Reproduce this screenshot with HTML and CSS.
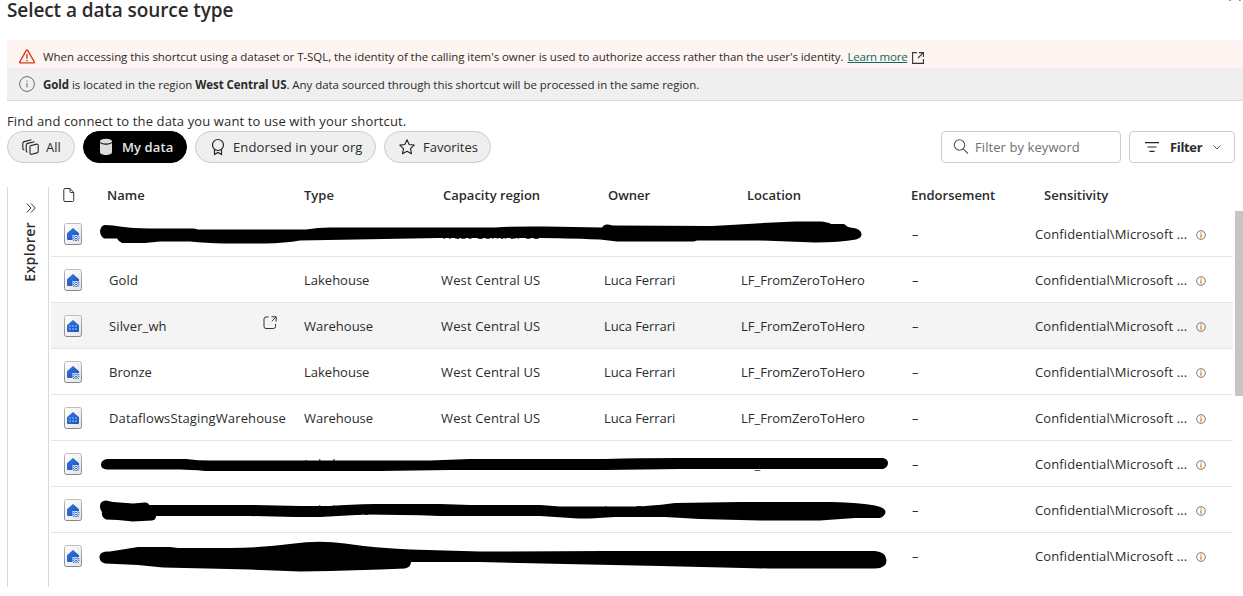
FILE: index.html
```
<!DOCTYPE html>
<html lang="en">
<head>
<meta charset="utf-8">
<title>Select a data source type</title>
<link rel="stylesheet" href="styles.css">
</head>
<body>
<svg class="defs" width="0" height="0">
  <defs>
    <linearGradient id="tile" x1="0" y1="0" x2="1" y2="1"><stop offset="0" stop-color="#fff"/><stop offset="1" stop-color="#e4e4e4"/></linearGradient>
    <linearGradient id="edge" x1="0" y1="0" x2="0" y2="1"><stop offset="0" stop-color="#bcbcbc"/><stop offset="1" stop-color="#858585"/></linearGradient>
    <linearGradient id="blue" x1="0" y1="0" x2="1" y2="1"><stop offset="0" stop-color="#2f78e0"/><stop offset="1" stop-color="#1d50bd"/></linearGradient>
    <symbol id="lakehouse" viewBox="0 0 18 22">
      <rect x=".5" y=".5" width="17" height="21" rx="2" fill="url(#tile)" stroke="url(#edge)"/>
      <path d="M3 10.200 9 5l6 5.200V12H8.500v5H4a1 1 0 0 1-1-1z" fill="url(#blue)"/>
      <path d="M9 13.800 10.500 12.800 12 13.800 13.500 12.800 15.500 13.500M8.500 15.800 10.500 14.800 12 15.800 13.500 14.800 15.500 15.500M9 17.600 10.500 16.800 12 17.600 13.500 16.800 15 17.300" fill="none" stroke="#2a65d0" stroke-width=".9"/>
    </symbol>
    <symbol id="warehouse" viewBox="0 0 18 22">
      <rect x=".5" y=".5" width="17" height="21" rx="2" fill="url(#tile)" stroke="url(#edge)"/>
      <path d="M3 10.200 9 5l6 5.200V16a1 1 0 0 1-1 1H4a1 1 0 0 1-1-1z" fill="url(#blue)"/>
      <path d="M5 10h2v2H5zM8 10h2v2H8zM11 10h2v2h-2zM5 13h2v2H5zM8 13h2v2H8zM11 13h2v2h-2z" fill="#5d93ea"/>
    </symbol>
    <symbol id="info" viewBox="0 0 10 10">
      <circle cx="5" cy="5" r="4.300" fill="none" stroke="#74777f" stroke-width="1"/>
      <path d="M5 4.200v3.500M5 2.300v1.200" stroke="#d98a30" stroke-width="1.400"/>
    </symbol>
  </defs>
</svg>
<main class="dialog">
  <svg class="close" width="12" height="2" viewBox="0 0 12 2"><path d="M-1-2 1.500.7M13-2 10.500.7" stroke="#333" stroke-width="1.200"/></svg>
  <h1 class="title">Select a data source type</h1>

  <div class="notice warning">
    <svg width="16" height="16" viewBox="0 0 16 16" fill="none" stroke="#d13f12" stroke-width="1.400"><path d="M7.300 1.300.8 12.700q-.5 1.100.7 1.200h13q1.200-.1.700-1.200L8.700 1.300q-.7-.9-1.400 0z"/><path d="M8 5v4.700M8 10.900v1.300"/></svg>
    <span class="note-text">When accessing this shortcut using a dataset or T-SQL, the identity of the calling item's owner is used to authorize access rather than the user's identity.</span>
    <a class="link">Learn more</a>
    <svg class="open" width="12" height="12" viewBox="0 0 12 12" fill="none" stroke="#333" stroke-width="1.100"><path d="M5 .6H.6v10.800h10.800V7M7 .6h4.400V5M11.400.6 6 6"/></svg>
  </div>
  <div class="notice region">
    <svg width="16" height="16" viewBox="0 0 16 16" fill="none" stroke="#6c6c6c"><circle cx="8" cy="8" r="7.400"/><path d="M8 7v4.500M8 4.500v1.200"/></svg>
    <span class="region-text"><b>Gold</b> is located in the region <b>West Central US</b>. Any data sourced through this shortcut will be processed in the same region.</span>
  </div>

  <p class="intro">Find and connect to the data you want to use with your shortcut.</p>
  <div class="toolbar">
    <button class="pill all"><svg width="17" height="16" viewBox="0 0 17 16" fill="none" stroke="#222" stroke-width="1.100" stroke-linejoin="round"><path d="M8.300 6.700 14.500 5.100q1.700-.3 1.700 1.400v5.700q0 1.300-1.300 1.700l-5 1.400q-1.900.4-1.900-1.400V8.100q0-1.100.3-1.400zM5.500 13.200q-1.300-.3-1.300-1.700V6.200q0-1.400 1.500-1.800l6.800-1.600M2.200 10.900Q.8 10.500.8 9.200V4.500q0-1.500 1.500-1.900L9.500.8"/></svg><span>All</span></button>
    <button class="pill mine"><svg width="14" height="18" viewBox="0 0 14 18"><path d="M1 4.800v9.500C1 16 3.500 17 7 17s6-1 6-2.700V4.800C11.500 6.300 9.500 6.700 7 6.700S2.500 6.300 1 4.800z" fill="#ddd"/><ellipse cx="7" cy="3.200" rx="6" ry="2.400" fill="#ddd"/></svg><span>My data</span></button>
    <button class="pill endorsed"><svg width="14" height="18" viewBox="0 0 14 18" fill="none" stroke="#222" stroke-width="1.200"><circle cx="7" cy="7" r="5.500"/><path d="M3.500 11.500v5L7 14.500l3.500 2v-5"/></svg><span>Endorsed in your org</span></button>
    <button class="pill favorites"><svg width="16" height="16" viewBox="0 0 16 16" fill="none" stroke="#222" stroke-width="1.100" stroke-linejoin="round"><path d="m8 .8 2.200 4.700 5 .6-3.700 3.500 1 5.200L8 12.300l-4.500 2.500 1-5.200L.8 6.100l5-.6z"/></svg><span>Favorites</span></button>
    <div class="search"><svg width="16" height="16" viewBox="0 0 16 16" fill="none" stroke="#555" stroke-width="1.100"><circle cx="6.500" cy="6" r="5.200"/><path d="m10.200 9.800 4.800 4.700"/></svg><span>Filter by keyword</span></div>
    <button class="filter"><svg width="14" height="10" viewBox="0 0 14 10" stroke="#222" stroke-width="1.200"><path d="M0 .6h14M2.500 5h9M4.500 9.400h5"/></svg><b>Filter</b><svg width="8" height="5" viewBox="0 0 8 5" fill="none" stroke="#555"><path d="m.5.500 3.500 3.500L7.500.5"/></svg></button>
  </div>

  <section class="content">
    <aside class="explorer">
      <svg width="10" height="10" viewBox="0 0 10 10" fill="none" stroke="#333"><path d="m.8.500 4.200 4.500L.8 9.500M5 .5l4.200 4.500L5 9.500"/></svg>
      <span>Explorer</span>
    </aside>
    <div class="table">
      <div class="row head">
        <span class="doc"><svg width="12" height="14" viewBox="0 0 12 14" fill="none" stroke="#333"><path d="M7 .5H2Q.8.500.8 1.700v10.600q0 1.200 1.200 1.200h7.500q1.200 0 1.200-1.200V4.500zM7 .5v3q0 1 1 1h2.700"/></svg></span>
        <span class="h-name">Name</span><span>Type</span><span class="h-region">Capacity region</span><span class="h-owner">Owner</span><span class="h-location">Location</span><span>Endorsement</span><span class="h-sens">Sensitivity</span>
      </div>
      <div class="row"><svg width="18" height="22"><use href="#lakehouse"/></svg><span></span><span></span><span class="wide">West Central US</span><span></span><span></span><span class="dash">–</span><span class="wide">Confidential\Microsoft ...</span><svg class="tip" width="10" height="10"><use href="#info"/></svg></div>
      <div class="row"><svg width="18" height="22"><use href="#lakehouse"/></svg><span class="wide">Gold</span><span>Lakehouse</span><span class="wide">West Central US</span><span class="owner">Luca Ferrari</span><span>LF_FromZeroToHero</span><span class="dash">–</span><span class="wide">Confidential\Microsoft ...</span><svg class="tip" width="10" height="10"><use href="#info"/></svg></div>
      <div class="row hover"><svg width="18" height="22"><use href="#warehouse"/></svg><span class="name wide">Silver_wh<svg class="launch" width="14" height="13" viewBox="0 0 14 13" fill="none" stroke="#333"><path d="M5.500 1H3Q1 1 1 3v7.500q0 2 2 2h7.500q2 0 2-2V8M8.500.8h4.700v4.700M13 1 8.800 5.200"/></svg></span><span>Warehouse</span><span class="wide">West Central US</span><span class="owner">Luca Ferrari</span><span>LF_FromZeroToHero</span><span class="dash">–</span><span class="wide">Confidential\Microsoft ...</span><svg class="tip" width="10" height="10"><use href="#info"/></svg></div>
      <div class="row"><svg width="18" height="22"><use href="#lakehouse"/></svg><span>Bronze</span><span>Lakehouse</span><span class="wide">West Central US</span><span class="owner">Luca Ferrari</span><span>LF_FromZeroToHero</span><span class="dash">–</span><span class="wide">Confidential\Microsoft ...</span><svg class="tip" width="10" height="10"><use href="#info"/></svg></div>
      <div class="row"><svg width="18" height="22"><use href="#warehouse"/></svg><span class="wide">DataflowsStagingWarehouse</span><span>Warehouse</span><span class="wide">West Central US</span><span class="owner">Luca Ferrari</span><span>LF_FromZeroToHero</span><span class="dash">–</span><span class="wide">Confidential\Microsoft ...</span><svg class="tip" width="10" height="10"><use href="#info"/></svg></div>
      <div class="row"><svg width="18" height="22"><use href="#lakehouse"/></svg><span></span><span>Lakehouse</span><span class="wide">West Central US</span><span></span><span>LF_</span><span class="dash">–</span><span class="wide">Confidential\Microsoft ...</span><svg class="tip" width="10" height="10"><use href="#info"/></svg></div>
      <div class="row"><svg width="18" height="22"><use href="#lakehouse"/></svg><span></span><span>Lakehouse</span><span class="wide">West Central US</span><span class="owner">Luca Ferrari</span><span></span><span class="dash">–</span><span class="wide">Confidential\Microsoft ...</span><svg class="tip" width="10" height="10"><use href="#info"/></svg></div>
      <div class="row last"><svg width="18" height="22"><use href="#lakehouse"/></svg><span></span><span></span><span></span><span></span><span></span><span class="dash">–</span><span class="wide">Confidential\Microsoft ...</span><svg class="tip" width="10" height="10"><use href="#info"/></svg></div>
    </div>
    <div class="scrollbar"></div>
  </section>

  <!-- Marker strokes laid over the private rows -->
  <svg class="marker" width="1243" height="596" viewBox="0 0 1243 596">
    <path d="M100 231Q101 225 105 225L113 225.500Q130 228.500 150 228.500H194L198 229.500H306Q318 227.500 330 227.500H495Q520 226 545 226.500L602 227.500Q604 224 608 224.500L613 225.500 712 226Q760 223 795 221.500H820Q828 222 831 224H844L848 227 856 228.500Q861 230 861.500 234T856 239.500Q840 242.500 815 242.500L760 240.500H697L694 241.500H617L600 239.500Q560 238 540 238H440L300 240.500Q285 243 265 243.500H225Q205 243 190 241.500H160L145 243H122Q119 242 117 238.500H104Q100 236 100 231z"/>
    <path d="M107 459H186Q198 460.500 210 460.500H430L470 459H605Q640 458 680 458H883Q888 459 888 463T883 469H680L605 470H450L380 471H205Q190 469.500 180 469.500H107Q101 469 101 464.500T107 459z"/>
    <path d="M100 506Q100 501 106 500.500L113 502 133 503.500 145 502.500Q149 503 149 505H250L300 506H330Q350 504.500 375 504H440L470 505H540L560 506.500H640Q665 504.500 675 503L740 502H832Q860 502.500 875 505.500 886 508 885.500 512T880 518H855L820 520.500H760L700 519 665 517H615L590 518.500H578L540 516H440Q400 514.500 365 514.500L320 517H295L250 516H156Q156 520 152 520.500L133 521.500 118 520 106 519.500Q101 517 102 512 100 510 100 506z"/>
    <path d="M110 551.500 138 547H170L178 548H230Q265 547.500 292 543.800T345 543.500Q375 548 410 549.500L480 551.500 605 551H875Q886 552 886.500 560T875 568.500H768L660 566 565 564 480 562H411Q411 567 405 568.500L380 569.500 330 571 300 571.500 250 569.500 163 567.500 138 565 105 563.500Q99 562 99.500 556.500T110 551.500z"/>
  </svg>
</main>
</body>
</html>
```
FILE: styles.css
```
* { box-sizing: border-box; }
body {
  margin: 0;
  background: #fff;
  color: #2b2b2b;
  font-family: "Open Sans", "Noto Sans", sans-serif;
  font-size: 13px;
}
.defs { position: absolute; }
.dialog { position: relative; width: 1243px; height: 596px; overflow: hidden; padding-left: 7px; }
.close { position: absolute; right: 2px; top: 0; }
.title { margin: 0; height: 40px; font-size: 19px; font-weight: 600; line-height: 20px; letter-spacing: -.09px; }

.notice { display: flex; align-items: center; padding-left: 12px; font-size: 11.500px; white-space: nowrap; }
.warning { height: 28px; padding-top: 5px; background: #fef4f1; }
.region { height: 33px; background: #efefef; border-bottom: 1px solid #dcdcdc; }
.notice > span { margin-left: 8px; }
.note-text { letter-spacing: -.064px; }
.region-text { letter-spacing: -.05px; }
.link { margin-left: 4px; color: #0c695a; text-decoration: underline; letter-spacing: -.25px; }
.open { margin-left: 5px; margin-top: 2px; }

.intro { margin: 0; height: 30px; padding-top: 11px; line-height: 18px; letter-spacing: .13px; }
.toolbar { display: flex; height: 32px; }
.pill, .filter { display: flex; align-items: center; height: 32px; padding: 0 0 0 14px; font: inherit; color: inherit; white-space: nowrap; }
.pill { margin-right: 8px; border: 1px solid #ccc; border-radius: 16px; background: #efefef; }
.all { width: 68px; gap: 7px; }
.mine { width: 104px; gap: 9px; padding-left: 15px; background: #000; border-color: #000; color: #e6e6e6; font-weight: 600; letter-spacing: .1px; }
.endorsed { width: 181px; gap: 8px; padding-left: 15px; letter-spacing: .13px; }
.favorites { width: 107px; gap: 8px; }
.search { display: flex; align-items: center; gap: 6px; width: 180px; margin-left: 442px; padding-left: 11px; border: 1px solid #ccc; border-radius: 4px; color: #707070; letter-spacing: .08px; }
.filter { width: 106px; margin-left: 8px; padding-left: 15px; gap: 11px; border: 1px solid #ccc; border-radius: 4px; background: #fff; }
b { font-weight: 700; }
.filter b { width: 32px; letter-spacing: -.35px; }

.content { display: flex; height: 433px; padding-top: 16px; }
.explorer { display: flex; flex-direction: column; align-items: center; width: 42px; height: 400px; margin-top: 8px; padding: 16px 0 0 5px; border: solid #d9d9d9; border-width: 0 1px; }
.explorer span { margin: 9px 2px 0 0; writing-mode: vertical-rl; transform: rotate(180deg); font-size: 14px; font-weight: 600; line-height: 18px; letter-spacing: .35px; }
.table { width: 1182px; margin-left: 2px; }
.row {
  display: grid;
  grid-template-columns: 45px 195px 137px 163px 137px 170px 124px 161px 10px;
  align-items: center;
  height: 46px;
  padding-left: 13px;
  border-bottom: 1px solid #e6e6e6;
  white-space: nowrap;
}
.head { height: 32px; border: 0; font-weight: 600; }
.doc svg { display: block; margin-left: -1px; }
.hover { background: #f4f4f4; }
.last { border: 0; }
.wide { letter-spacing: .13px; }
.owner { letter-spacing: -.08px; }
.dash { padding-left: 1px; }
.tip { margin-top: 2px; }
.name { display: flex; align-items: center; }
.launch { margin: -7px 27px 0 auto; }
.h-name { margin-left: -2px; }
.h-region { margin-left: 2px; }
.h-owner { margin-left: 4px; }
.h-location { margin-left: 6px; }
.h-sens { margin-left: 9px; }
.scrollbar { width: 8px; height: 185px; margin: 32px 0 0 2px; background: #c5c5c5; }
.marker { position: absolute; left: 0; top: 0; pointer-events: none; }
```
